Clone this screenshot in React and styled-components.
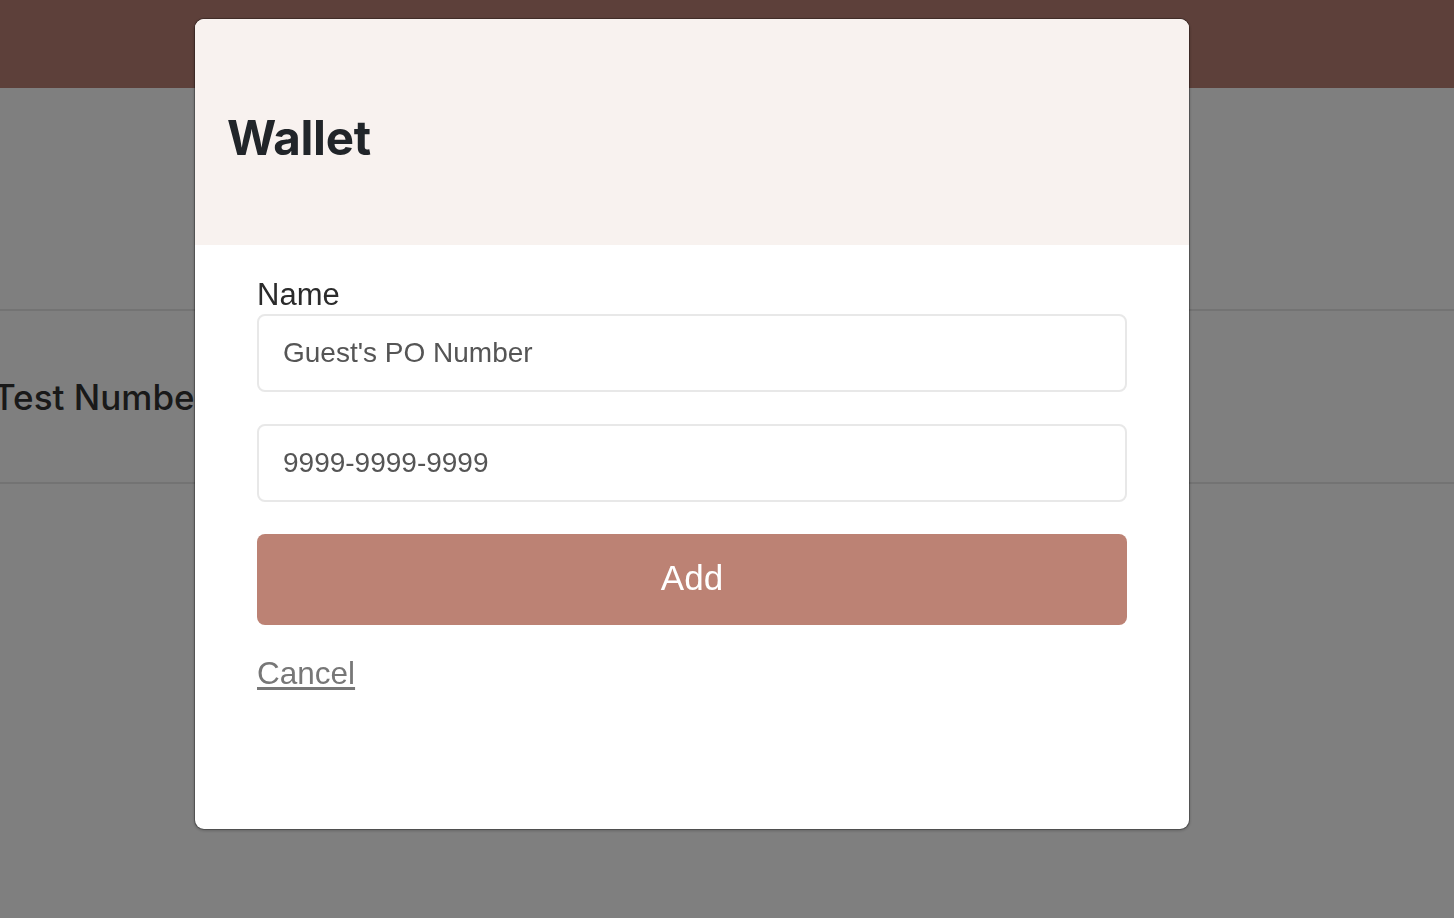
import React from 'react'
import styled, { createGlobalStyle } from 'styled-components'

const GlobalStyle = createGlobalStyle`
  html, body {
    margin: 0;
    padding: 0;
    background: #fff;
  }
  body {
    font-family: "Liberation Sans", Arial, sans-serif;
    overflow: hidden;
  }
`

const Page = styled.div`
  height: 918px;
  background: #fff;
`

const TopBar = styled.div`
  height: 88px;
  background: #ba8074;
`

const Hero = styled.div`
  height: 221px;
  border-bottom: 2px solid #e6e6e6;
`

const Row = styled.div`
  height: 171px;
  display: flex;
  align-items: center;
  border-bottom: 2px solid #e6e6e6;
  overflow: hidden;
`

const RowLabel = styled.span`
  font-family: Inter, "Noto Sans", sans-serif;
  font-size: 35px;
  font-weight: 500;
  color: #333;
  margin-left: -7px;
  white-space: nowrap;
`

const Backdrop = styled.div`
  position: fixed;
  inset: 0;
  background: rgba(0, 0, 0, 0.5);
  padding: 18px 0 0 194px;
`

const Modal = styled.div`
  width: 996px;
  height: 812px;
  box-sizing: border-box;
  background: #fff;
  background-clip: padding-box;
  border: 1px solid rgba(0, 0, 0, 0.25);
  border-radius: 10px;
  box-shadow: 0 1px 3px rgba(0, 0, 0, 0.2);
  overflow: hidden;
  display: flex;
  flex-direction: column;
`

const ModalHeader = styled.div`
  height: 226px;
  flex-shrink: 0;
  box-sizing: border-box;
  background: #f8f2ef;
  display: flex;
  align-items: center;
  padding: 10px 32px 0;
`

const Title = styled.h2`
  margin: 0;
  font-family: Inter, "Noto Sans", sans-serif;
  font-size: 47.5px;
  font-weight: 700;
  color: #212529;
  letter-spacing: -0.3px;
`

const ModalBody = styled.div`
  padding: 32px 62px 0;
  display: flex;
  flex-direction: column;
`

const Label = styled.label`
  font-size: 31px;
  line-height: 36px;
  color: #2b2b2b;
  margin-bottom: 1px;
`

const Input = styled.div`
  height: 78px;
  box-sizing: border-box;
  border: 2px solid #e8e8e8;
  border-radius: 8px;
  display: flex;
  align-items: center;
  padding: 0 24px;
  font-size: 28px;
  color: #555;
  margin-bottom: ${props => props.gap}px;
`

const AddButton = styled.button`
  height: 91px;
  border: none;
  border-radius: 8px;
  background: #bc8274;
  color: #fff;
  font-family: "Liberation Sans", Arial, sans-serif;
  font-size: 35px;
  padding: 0 0 4px;
  cursor: pointer;
`

const CancelLink = styled.a`
  margin-top: 30px;
  align-self: flex-start;
  font-size: 31.5px;
  color: #777;
  text-decoration: underline;
  text-underline-offset: 3px;
`

export default function App() {
  return (
    <>
      <GlobalStyle />
      <Page>
        <TopBar />
        <Hero />
        <Row>
          <RowLabel>Test Number</RowLabel>
        </Row>
      </Page>
      <Backdrop>
        <Modal>
          <ModalHeader>
            <Title>Wallet</Title>
          </ModalHeader>
          <ModalBody>
            <Label>Name</Label>
            <Input gap={32}>Guest's PO Number</Input>
            <Input gap={32}>9999-9999-9999</Input>
            <AddButton>Add</AddButton>
            <CancelLink>Cancel</CancelLink>
          </ModalBody>
        </Modal>
      </Backdrop>
    </>
  )
}
